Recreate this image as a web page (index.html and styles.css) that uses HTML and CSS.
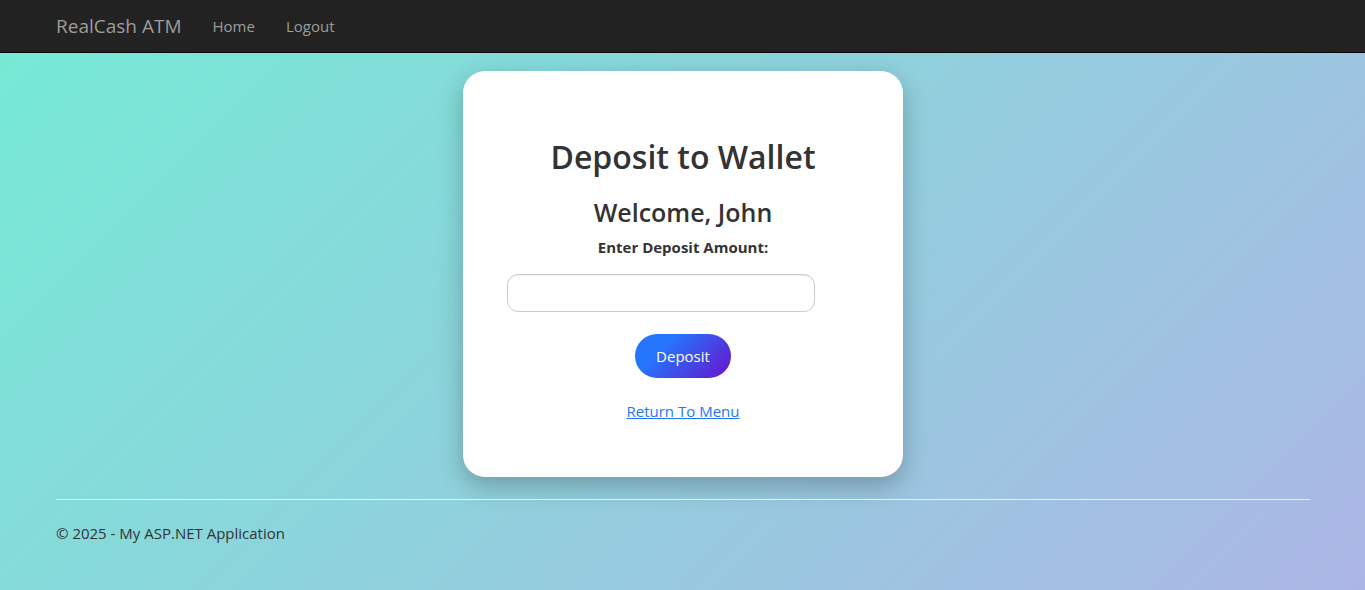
FILE: index.html
```html
<!DOCTYPE html>
<html lang="en">
<head>
<meta charset="utf-8">
<title>Deposit</title>
<link rel="stylesheet" href="styles.css">
</head>
<body>
<header class="navbar">
  <nav class="container nav-row">
    <a class="brand" href="#">RealCash ATM</a>
    <a class="nav-link" href="#">Home</a>
    <a class="nav-link" href="#">Logout</a>
  </nav>
</header>
<main class="container">
  <form class="card">
    <h1 class="title">Deposit to Wallet</h1>
    <h2 class="welcome">Welcome, John</h2>
    <label class="label" for="amount">Enter Deposit Amount:</label>
    <input class="amount" id="amount" type="text">
    <button class="deposit" type="button">Deposit</button>
    <a class="return" href="#">Return To Menu</a>
  </form>
</main>
<footer class="container footer">
  <p class="copyright">© 2025 - My ASP.NET Application</p>
</footer>
</body>
</html>
```
FILE: styles.css
```css
* {
  box-sizing: border-box;
}

body {
  margin: 0;
  min-height: 100vh;
  font-family: "Segoe UI", "Open Sans", "Noto Sans", sans-serif;
  font-size: 15px;
  line-height: 22px;
  color: #333;
  background: linear-gradient(135deg, #74ebd5, #acb6e5);
}

.container {
  margin: 0 55px 0 56px;
}

.navbar {
  background: #222;
  border-bottom: 1px solid #080808;
}

.nav-row {
  display: flex;
  align-items: center;
  height: 52px;
  gap: 31px;
}

.brand,
.nav-link {
  color: #9d9d9d;
  text-decoration: none;
}

.brand {
  font-size: 19px;
}

.card {
  display: flex;
  flex-direction: column;
  align-items: center;
  max-width: 440px;
  margin: 18px auto 22px;
  padding: 66px 44px 55px;
  background: #fff;
  border-radius: 22px;
  box-shadow: 0 9px 26px rgba(0, 0, 0, 0.25);
}

.title {
  margin: 0 0 20px;
  font-size: 32px;
  line-height: 40px;
  font-weight: 600;
}

.welcome {
  margin: 0 0 9px;
  font-size: 25px;
  line-height: 30px;
  font-weight: 600;
}

.label {
  font-weight: 700;
  margin-bottom: 16px;
}

.amount {
  align-self: flex-start;
  width: 308px;
  max-width: 100%;
  height: 38px;
  padding: 6px 12px;
  font: inherit;
  border: 1px solid #ccc;
  border-radius: 11px;
  box-shadow: inset 0 1px 1px rgba(0, 0, 0, 0.075);
}

.deposit {
  margin: 22px 0;
  padding: 11px 21px;
  font: inherit;
  color: #fff;
  border: 0;
  border-radius: 33px;
  background: linear-gradient(135deg, #2575fc 30%, #6a11cb);
}

.return {
  color: #2575fc;
}

.footer {
  border-top: 1px solid #eee;
}

.copyright {
  margin: 22px 0;
}
```
